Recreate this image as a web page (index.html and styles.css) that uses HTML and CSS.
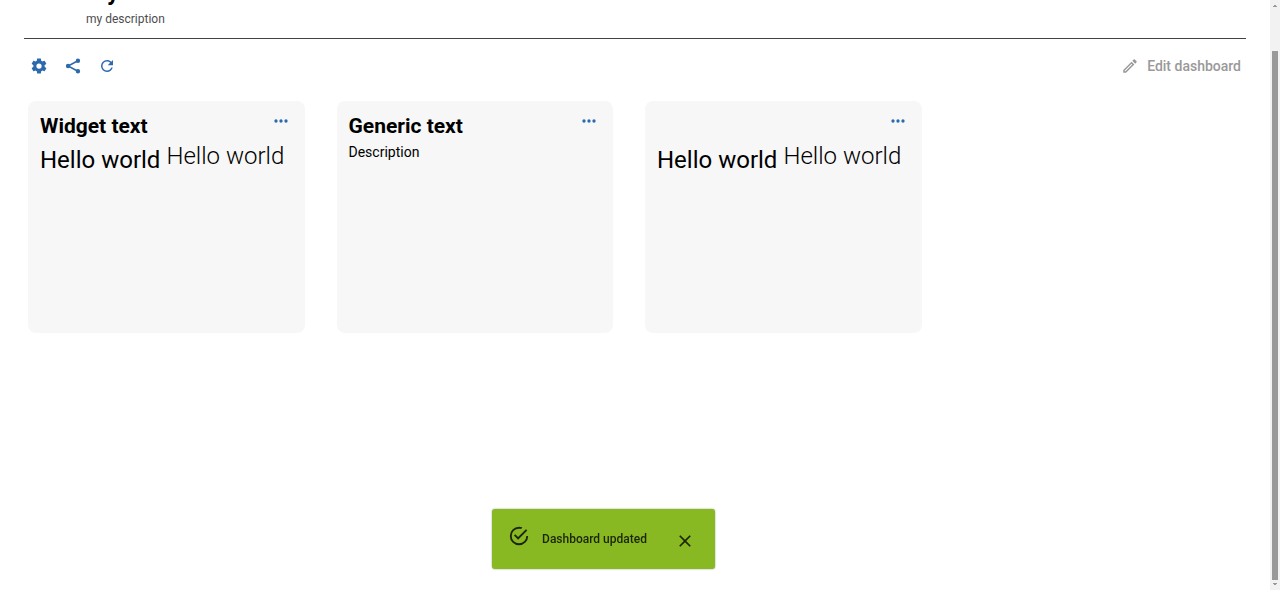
FILE: index.html
```html
<!DOCTYPE html>
<html lang="en">
<head>
<meta charset="utf-8">
<title>My dashboard</title>
<link rel="stylesheet" href="styles.css">
</head>
<body>
<svg class="sprite" aria-hidden="true">
  <symbol id="dots" viewBox="0 0 24 24"><path d="M16,12A2,2 0 0,1 18,10A2,2 0 0,1 20,12A2,2 0 0,1 18,14A2,2 0 0,1 16,12M10,12A2,2 0 0,1 12,10A2,2 0 0,1 14,12A2,2 0 0,1 12,14A2,2 0 0,1 10,12M4,12A2,2 0 0,1 6,10A2,2 0 0,1 8,12A2,2 0 0,1 6,14A2,2 0 0,1 4,12Z"/></symbol>
</svg>
<div class="page">
  <main class="main">
    <header class="header">
      <h1 class="title">My dashboard</h1>
      <p class="subtitle">my description</p>
    </header>
    <div class="toolbar">
      <button class="icon-button" type="button" aria-label="Settings"><svg class="icon" viewBox="0 0 24 24"><path d="M12,15.5A3.5,3.5 0 0,1 8.5,12A3.5,3.5 0 0,1 12,8.5A3.5,3.5 0 0,1 15.5,12A3.5,3.5 0 0,1 12,15.5M19.43,12.97C19.47,12.65 19.5,12.33 19.5,12C19.5,11.67 19.47,11.34 19.43,11L21.54,9.37C21.73,9.22 21.78,8.95 21.66,8.73L19.66,5.27C19.54,5.05 19.27,4.96 19.05,5.05L16.56,6.05C16.04,5.66 15.5,5.32 14.87,5.07L14.5,2.42C14.46,2.18 14.25,2 14,2H10C9.75,2 9.54,2.18 9.5,2.42L9.13,5.07C8.5,5.32 7.96,5.66 7.44,6.05L4.95,5.05C4.73,4.96 4.46,5.05 4.34,5.27L2.34,8.73C2.21,8.95 2.27,9.22 2.46,9.37L4.57,11C4.53,11.34 4.5,11.67 4.5,12C4.5,12.33 4.53,12.65 4.57,12.97L2.46,14.63C2.27,14.78 2.21,15.05 2.34,15.27L4.34,18.73C4.46,18.95 4.73,19.03 4.95,18.95L7.44,17.94C7.96,18.34 8.5,18.68 9.13,18.93L9.5,21.58C9.54,21.82 9.75,22 10,22H14C14.25,22 14.46,21.82 14.5,21.58L14.87,18.93C15.5,18.67 16.04,18.34 16.56,17.94L19.05,18.95C19.27,19.03 19.54,18.95 19.66,18.73L21.66,15.27C21.78,15.05 21.73,14.78 21.54,14.63L19.43,12.97Z"/></svg></button>
      <button class="icon-button" type="button" aria-label="Share"><svg class="icon" viewBox="0 0 24 24"><path d="M21.5,5A2.9,2.9 0 1 1 15.7,5A2.9,2.9 0 1 1 21.5,5ZM8.3,12A2.9,2.9 0 1 1 2.5,12A2.9,2.9 0 1 1 8.3,12ZM21.5,19A2.9,2.9 0 1 1 15.7,19A2.9,2.9 0 1 1 21.5,19Z"/><path class="share-line" d="M18.6,5L5.4,12L18.6,19"/></svg></button>
      <button class="icon-button" type="button" aria-label="Refresh"><svg class="icon" viewBox="0 0 24 24"><path d="M17.65,6.35C16.2,4.9 14.21,4 12,4A8,8 0 0,0 4,12A8,8 0 0,0 12,20C15.73,20 18.84,17.45 19.73,14H17.65C16.83,16.33 14.61,18 12,18A6,6 0 0,1 6,12A6,6 0 0,1 12,6C13.66,6 15.14,6.69 16.22,7.78L13,11H20V4L17.65,6.35Z"/></svg></button>
      <button class="edit-button" type="button"><svg class="icon" viewBox="0 0 24 24"><path d="M14.06,9L15,9.94L5.92,19H5V18.08L14.06,9M17.66,3C17.41,3 17.15,3.1 16.96,3.29L15.13,5.12L18.88,8.87L20.71,7.04C21.1,6.65 21.1,6 20.71,5.63L18.37,3.29C18.17,3.09 17.92,3 17.66,3M14.06,6.19L3,17.25V21H6.75L17.81,9.94L14.06,6.19Z"/></svg>Edit dashboard</button>
    </div>
    <div class="widgets">
      <section class="card">
        <div class="card-head"><h2 class="card-title">Widget text</h2><button class="menu-button" type="button" aria-label="Widget menu"><svg class="icon-dots"><use href="#dots"/></svg></button></div>
        <div class="rich-text"><span class="regular">Hello world</span><span class="light">Hello world</span></div>
      </section>
      <section class="card">
        <div class="card-head"><h2 class="card-title">Generic text</h2><button class="menu-button" type="button" aria-label="Widget menu"><svg class="icon-dots"><use href="#dots"/></svg></button></div>
        <p class="card-text">Description</p>
      </section>
      <section class="card">
        <div class="card-head"><button class="menu-button" type="button" aria-label="Widget menu"><svg class="icon-dots"><use href="#dots"/></svg></button></div>
        <div class="rich-text"><span class="regular">Hello world</span><span class="light">Hello world</span></div>
      </section>
    </div>
  </main>
  <div class="scrollbar" aria-hidden="true">
    <svg class="arrow" viewBox="0 0 6 4"><path d="M2,1H4V2H5V3H1V2H2Z"/></svg>
    <div class="thumb"></div>
    <svg class="arrow" viewBox="0 0 6 4"><path d="M1,1H5V2H4V3H2V2H1Z"/></svg>
  </div>
</div>
<div class="toast-layer">
  <div class="toast" role="status">
    <svg class="toast-icon" viewBox="0 0 24 24"><path d="M20,12A8,8 0 0,1 12,20A8,8 0 0,1 4,12A8,8 0 0,1 12,4C12.76,4 13.5,4.11 14.2,4.31L15.77,2.74C14.61,2.26 13.34,2 12,2A10,10 0 0,0 2,12A10,10 0 0,0 12,22A10,10 0 0,0 22,12M7.91,10.08L6.5,11.5L11,16L21,6L19.59,4.58L11,13.17L7.91,10.08Z"/></svg>
    <span class="toast-text">Dashboard updated</span>
    <button class="toast-close" type="button" aria-label="Close"><svg class="icon-close" viewBox="0 0 24 24"><path d="M19,6.41L17.59,5L12,10.59L6.41,5L5,6.41L10.59,12L5,17.59L6.41,19L12,13.41L17.59,19L19,17.59L13.41,12L19,6.41Z"/></svg></button>
  </div>
</div>
</body>
</html>
```
FILE: styles.css
```css
* { box-sizing: border-box; }
body {
  margin: 0;
  font-family: Roboto, sans-serif;
  font-size: 14px;
  color: #000;
  background: #fff;
}
h1, h2, p { margin: 0; }
svg { display: block; fill: currentColor; }
button {
  padding: 0;
  border: 0;
  background: none;
  font: inherit;
  color: #2d69ad;
  cursor: pointer;
}
.sprite { position: absolute; width: 0; height: 0; }
.page {
  display: grid;
  grid-template-columns: 1fr 10px;
  height: 100vh;
  overflow: hidden;
}
.main { min-width: 0; padding: 0 24px; }
.header {
  margin-top: -24px;
  padding: 0 0 9px 62px;
  border-bottom: 1px solid #424242;
}
.title { font-size: 24px; line-height: 32px; font-weight: 700; }
.subtitle { padding-top: 1px; font-size: 12px; line-height: 20px; color: #4d4d4f; }
.toolbar {
  display: flex;
  align-items: center;
  gap: 16px;
  height: 54px;
  padding: 0 5px 0 6px;
}
.icon { width: 18px; height: 18px; }
.share-line { fill: none; stroke: currentColor; stroke-width: 2; }
.edit-button {
  display: flex;
  align-items: center;
  gap: 8px;
  margin-left: auto;
  font-weight: 500;
  color: #999;
}
.widgets {
  display: grid;
  grid-template-columns: repeat(4, 1fr);
  gap: 32px;
  padding: 8px 16px 0 4px;
}
.card {
  min-height: 232px;
  padding: 10px 12px;
  border-radius: 8px;
  background: #f7f7f7;
}
.card-head { display: flex; min-height: 32px; }
.card-title { font-size: 21px; line-height: 30px; font-weight: 700; }
.menu-button { height: 20px; margin-left: auto; padding-right: 2px; }
.icon-dots { width: 20px; height: 20px; }
.card-text { line-height: 18px; }
.rich-text {
  display: flex;
  gap: 6px;
  font-size: 24px;
  line-height: 26px;
  white-space: nowrap;
}
.regular { padding-top: 4px; }
.light { font-weight: 300; }
.scrollbar {
  display: flex;
  flex-direction: column;
  align-items: center;
  padding: 4px 0;
  background: #f2f2f2;
}
.arrow { width: 6px; height: 4px; color: #999; }
.thumb { flex: 1; width: 6px; margin: 43px 0 2px; background: #999; }
.toast-layer {
  position: fixed;
  left: 0;
  right: 73px;
  bottom: 21px;
  display: flex;
  justify-content: center;
}
.toast {
  display: flex;
  align-items: center;
  min-height: 60px;
  padding: 0 20px 0 16px;
  border-radius: 3px;
  background: #88b922;
  box-shadow: 0 0 2px rgba(0, 0, 0, 0.4);
  color: #1b2507;
}
.toast-icon { width: 22px; height: 22px; margin-bottom: 6px; }
.toast-text { padding: 0 28px 0 12px; font-size: 12px; font-weight: 500; }
.toast-close { padding-top: 4px; color: inherit; }
.icon-close { width: 20px; height: 20px; }
```
